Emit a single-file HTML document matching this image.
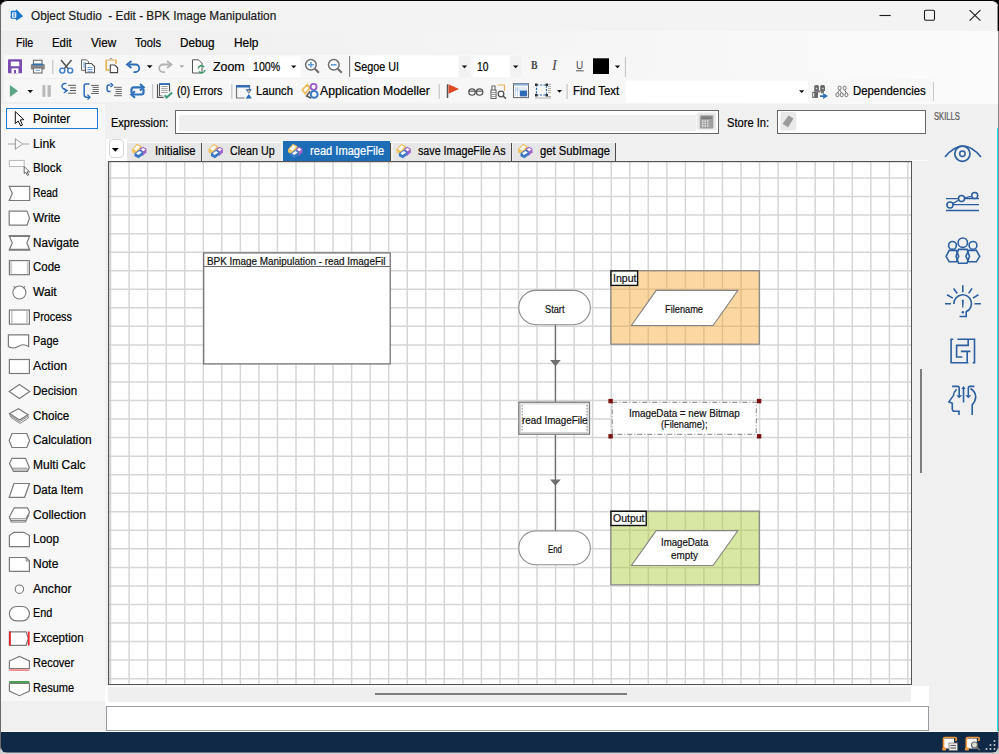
<!DOCTYPE html><html><head><meta charset="utf-8"><style>
html,body{margin:0;padding:0;width:999px;height:754px;overflow:hidden;background:#000;}
body{position:relative;font-family:"Liberation Sans",sans-serif;-webkit-text-stroke:0.2px currentColor;}
</style></head><body>
<div style="position:absolute;left:0px;top:0px;width:999px;height:754px;background:#f0f0f0;"></div>
<div style="position:absolute;left:0px;top:0px;width:999px;height:31px;background:#f3f3f3;"></div>
<div style="position:absolute;left:0px;top:31px;width:999px;height:23px;background:linear-gradient(to right,#eeeeee,#fbfbfb);"></div>
<div style="position:absolute;left:0px;top:54px;width:999px;height:50px;background:linear-gradient(to right,#eeeeee,#fbfbfb);"></div>
<div style="position:absolute;left:4px;top:55px;width:622px;height:23px;background:#f7f7f7;border-radius:3px 0 0 3px;"></div>
<div style="position:absolute;left:4px;top:79px;width:930px;height:23px;background:#f7f7f7;border-radius:3px 0 0 3px;"></div>
<div style="position:absolute;left:30.8px;top:8.73px;font-size:13px;line-height:14.52px;color:#1a1a1a;white-space:pre;transform:scaleX(0.9073);transform-origin:0 0;">Object Studio  - Edit - BPK Image Manipulation</div>
<div style="position:absolute;left:16.4px;top:36.87px;font-size:12.3px;line-height:13.74px;color:#000;white-space:pre;transform:scaleX(0.8678);transform-origin:0 0;">File</div>
<div style="position:absolute;left:52.4px;top:36.87px;font-size:12.3px;line-height:13.74px;color:#000;white-space:pre;transform:scaleX(0.9247);transform-origin:0 0;">Edit</div>
<div style="position:absolute;left:90.8px;top:36.87px;font-size:12.3px;line-height:13.74px;color:#000;white-space:pre;transform:scaleX(0.9531);transform-origin:0 0;">View</div>
<div style="position:absolute;left:134.9px;top:36.87px;font-size:12.3px;line-height:13.74px;color:#000;white-space:pre;transform:scaleX(0.9089);transform-origin:0 0;">Tools</div>
<div style="position:absolute;left:180px;top:36.87px;font-size:12.3px;line-height:13.74px;color:#000;white-space:pre;transform:scaleX(0.9546);transform-origin:0 0;">Debug</div>
<div style="position:absolute;left:233.5px;top:36.87px;font-size:12.3px;line-height:13.74px;color:#000;white-space:pre;transform:scaleX(0.9685);transform-origin:0 0;">Help</div>
<div style="position:absolute;left:1px;top:104px;width:104px;height:597px;background:#f7f7f7;"></div>
<div style="position:absolute;left:6px;top:108px;width:92px;height:21px;border:1px solid #1a7ad4;background:#fafafa;box-sizing:border-box;"></div>
<div style="position:absolute;left:32.8px;top:112.87px;font-size:12.3px;line-height:13.74px;color:#000;white-space:pre;transform:scaleX(0.9545);transform-origin:0 0;">Pointer</div>
<div style="position:absolute;left:32.8px;top:137.60px;font-size:12.3px;line-height:13.74px;color:#000;white-space:pre;transform:scaleX(0.9838);transform-origin:0 0;">Link</div>
<div style="position:absolute;left:32.8px;top:162.33px;font-size:12.3px;line-height:13.74px;color:#000;white-space:pre;transform:scaleX(0.9475);transform-origin:0 0;">Block</div>
<div style="position:absolute;left:32.8px;top:187.06px;font-size:12.3px;line-height:13.74px;color:#000;white-space:pre;transform:scaleX(0.8434);transform-origin:0 0;">Read</div>
<div style="position:absolute;left:32.8px;top:211.79px;font-size:12.3px;line-height:13.74px;color:#000;white-space:pre;transform:scaleX(0.9623);transform-origin:0 0;">Write</div>
<div style="position:absolute;left:32.8px;top:236.52px;font-size:12.3px;line-height:13.74px;color:#000;white-space:pre;transform:scaleX(0.9475);transform-origin:0 0;">Navigate</div>
<div style="position:absolute;left:32.8px;top:261.25px;font-size:12.3px;line-height:13.74px;color:#000;white-space:pre;transform:scaleX(0.9318);transform-origin:0 0;">Code</div>
<div style="position:absolute;left:32.8px;top:285.98px;font-size:12.3px;line-height:13.74px;color:#000;white-space:pre;transform:scaleX(0.9816);transform-origin:0 0;">Wait</div>
<div style="position:absolute;left:32.8px;top:310.71px;font-size:12.3px;line-height:13.74px;color:#000;white-space:pre;transform:scaleX(0.8755);transform-origin:0 0;">Process</div>
<div style="position:absolute;left:32.8px;top:335.44px;font-size:12.3px;line-height:13.74px;color:#000;white-space:pre;transform:scaleX(0.8911);transform-origin:0 0;">Page</div>
<div style="position:absolute;left:32.8px;top:360.17px;font-size:12.3px;line-height:13.74px;color:#000;white-space:pre;transform:scaleX(0.9975);transform-origin:0 0;">Action</div>
<div style="position:absolute;left:32.8px;top:384.90px;font-size:12.3px;line-height:13.74px;color:#000;white-space:pre;transform:scaleX(0.9370);transform-origin:0 0;">Decision</div>
<div style="position:absolute;left:32.8px;top:409.63px;font-size:12.3px;line-height:13.74px;color:#000;white-space:pre;transform:scaleX(0.9481);transform-origin:0 0;">Choice</div>
<div style="position:absolute;left:32.8px;top:434.36px;font-size:12.3px;line-height:13.74px;color:#000;white-space:pre;transform:scaleX(0.9646);transform-origin:0 0;">Calculation</div>
<div style="position:absolute;left:32.8px;top:459.09px;font-size:12.3px;line-height:13.74px;color:#000;white-space:pre;transform:scaleX(0.9742);transform-origin:0 0;">Multi Calc</div>
<div style="position:absolute;left:32.8px;top:483.82px;font-size:12.3px;line-height:13.74px;color:#000;white-space:pre;transform:scaleX(0.9377);transform-origin:0 0;">Data Item</div>
<div style="position:absolute;left:32.8px;top:508.55px;font-size:12.3px;line-height:13.74px;color:#000;white-space:pre;transform:scaleX(0.9813);transform-origin:0 0;">Collection</div>
<div style="position:absolute;left:32.8px;top:533.28px;font-size:12.3px;line-height:13.74px;color:#000;white-space:pre;transform:scaleX(0.9538);transform-origin:0 0;">Loop</div>
<div style="position:absolute;left:32.8px;top:558.01px;font-size:12.3px;line-height:13.74px;color:#000;white-space:pre;transform:scaleX(0.9776);transform-origin:0 0;">Note</div>
<div style="position:absolute;left:32.8px;top:582.74px;font-size:12.3px;line-height:13.74px;color:#000;white-space:pre;transform:scaleX(0.9878);transform-origin:0 0;">Anchor</div>
<div style="position:absolute;left:32.8px;top:607.47px;font-size:12.3px;line-height:13.74px;color:#000;white-space:pre;transform:scaleX(0.8818);transform-origin:0 0;">End</div>
<div style="position:absolute;left:32.8px;top:632.20px;font-size:12.3px;line-height:13.74px;color:#000;white-space:pre;transform:scaleX(0.9367);transform-origin:0 0;">Exception</div>
<div style="position:absolute;left:32.8px;top:656.93px;font-size:12.3px;line-height:13.74px;color:#000;white-space:pre;transform:scaleX(0.8995);transform-origin:0 0;">Recover</div>
<div style="position:absolute;left:32.8px;top:681.66px;font-size:12.3px;line-height:13.74px;color:#000;white-space:pre;transform:scaleX(0.8995);transform-origin:0 0;">Resume</div>
<div style="position:absolute;left:111.2px;top:116.87px;font-size:12.3px;line-height:13.74px;color:#000;white-space:pre;transform:scaleX(0.8916);transform-origin:0 0;">Expression:</div>
<div style="position:absolute;left:175px;top:110px;width:544px;height:24px;border:1px solid #676767;background:#fff;box-sizing:border-box;"></div>
<div style="position:absolute;left:179px;top:115px;width:517px;height:16px;background:#efefef;"></div>
<div style="position:absolute;left:727.2px;top:116.87px;font-size:12.3px;line-height:13.74px;color:#000;white-space:pre;transform:scaleX(0.9055);transform-origin:0 0;">Store In:</div>
<div style="position:absolute;left:777px;top:110px;width:149px;height:24px;border:1px solid #676767;background:#fff;box-sizing:border-box;"></div>
<div style="position:absolute;left:106px;top:139px;width:21px;height:22px;background:#fff;"></div>
<div style="position:absolute;left:108.5px;top:139.4px;width:15.2px;height:18.3px;background:#fff;border:1.5px solid #d6d6d6;border-radius:4px;box-sizing:border-box;"></div>
<div style="position:absolute;left:127px;top:142px;width:488px;height:1px;background:#fafafa;"></div>
<div style="position:absolute;left:127px;top:143px;width:74px;height:18px;background:#e6e6e6;"></div>
<div style="position:absolute;left:154.5px;top:145.17px;font-size:12.3px;line-height:13.74px;color:#000;white-space:pre;transform:scaleX(0.9114);transform-origin:0 0;">Initialise</div>
<div style="position:absolute;left:200.8px;top:142.5px;width:1.3px;height:18.7px;background:#4a4a4a;"></div>
<div style="position:absolute;left:203px;top:143px;width:78px;height:18px;background:#e6e6e6;"></div>
<div style="position:absolute;left:230.4px;top:145.17px;font-size:12.3px;line-height:13.74px;color:#000;white-space:pre;transform:scaleX(0.8697);transform-origin:0 0;">Clean Up</div>
<div style="position:absolute;left:282.8px;top:141.4px;width:107.39999999999998px;height:19.8px;background:#1c6db6;"></div>
<div style="position:absolute;left:309.7px;top:145.17px;font-size:12.3px;line-height:13.74px;color:#fff;white-space:pre;transform:scaleX(0.9032);transform-origin:0 0;">read ImageFile</div>
<div style="position:absolute;left:390.0px;top:142.5px;width:1.3px;height:18.7px;background:#4a4a4a;"></div>
<div style="position:absolute;left:392.8px;top:143px;width:118.5px;height:18px;background:#e6e6e6;"></div>
<div style="position:absolute;left:417.5px;top:145.17px;font-size:12.3px;line-height:13.74px;color:#000;white-space:pre;transform:scaleX(0.8707);transform-origin:0 0;">save ImageFile As</div>
<div style="position:absolute;left:511.1px;top:142.5px;width:1.3px;height:18.7px;background:#4a4a4a;"></div>
<div style="position:absolute;left:513.3px;top:143px;width:101.5px;height:18px;background:#e6e6e6;"></div>
<div style="position:absolute;left:540px;top:145.17px;font-size:12.3px;line-height:13.74px;color:#000;white-space:pre;transform:scaleX(0.9140);transform-origin:0 0;">get SubImage</div>
<div style="position:absolute;left:614.5999999999999px;top:142.5px;width:1.3px;height:18.7px;background:#4a4a4a;"></div>
<svg style="position:absolute;left:108px;top:161px;" width="804" height="524" viewBox="0 0 804 524"><rect x="0" y="0" width="804" height="524" fill="#fff"/><line x1="2.56" y1="0" x2="2.56" y2="524" stroke="#d6d6d6" stroke-width="1.5"/><line x1="21.10" y1="0" x2="21.10" y2="524" stroke="#d6d6d6" stroke-width="1.5"/><line x1="39.65" y1="0" x2="39.65" y2="524" stroke="#d6d6d6" stroke-width="1.5"/><line x1="58.19" y1="0" x2="58.19" y2="524" stroke="#d6d6d6" stroke-width="1.5"/><line x1="76.73" y1="0" x2="76.73" y2="524" stroke="#d6d6d6" stroke-width="1.5"/><line x1="95.28" y1="0" x2="95.28" y2="524" stroke="#d6d6d6" stroke-width="1.5"/><line x1="113.82" y1="0" x2="113.82" y2="524" stroke="#d6d6d6" stroke-width="1.5"/><line x1="132.36" y1="0" x2="132.36" y2="524" stroke="#d6d6d6" stroke-width="1.5"/><line x1="150.90" y1="0" x2="150.90" y2="524" stroke="#d6d6d6" stroke-width="1.5"/><line x1="169.45" y1="0" x2="169.45" y2="524" stroke="#d6d6d6" stroke-width="1.5"/><line x1="187.99" y1="0" x2="187.99" y2="524" stroke="#d6d6d6" stroke-width="1.5"/><line x1="206.53" y1="0" x2="206.53" y2="524" stroke="#d6d6d6" stroke-width="1.5"/><line x1="225.08" y1="0" x2="225.08" y2="524" stroke="#d6d6d6" stroke-width="1.5"/><line x1="243.62" y1="0" x2="243.62" y2="524" stroke="#d6d6d6" stroke-width="1.5"/><line x1="262.16" y1="0" x2="262.16" y2="524" stroke="#d6d6d6" stroke-width="1.5"/><line x1="280.71" y1="0" x2="280.71" y2="524" stroke="#d6d6d6" stroke-width="1.5"/><line x1="299.25" y1="0" x2="299.25" y2="524" stroke="#d6d6d6" stroke-width="1.5"/><line x1="317.79" y1="0" x2="317.79" y2="524" stroke="#d6d6d6" stroke-width="1.5"/><line x1="336.33" y1="0" x2="336.33" y2="524" stroke="#d6d6d6" stroke-width="1.5"/><line x1="354.88" y1="0" x2="354.88" y2="524" stroke="#d6d6d6" stroke-width="1.5"/><line x1="373.42" y1="0" x2="373.42" y2="524" stroke="#d6d6d6" stroke-width="1.5"/><line x1="391.96" y1="0" x2="391.96" y2="524" stroke="#d6d6d6" stroke-width="1.5"/><line x1="410.51" y1="0" x2="410.51" y2="524" stroke="#d6d6d6" stroke-width="1.5"/><line x1="429.05" y1="0" x2="429.05" y2="524" stroke="#d6d6d6" stroke-width="1.5"/><line x1="447.59" y1="0" x2="447.59" y2="524" stroke="#d6d6d6" stroke-width="1.5"/><line x1="466.14" y1="0" x2="466.14" y2="524" stroke="#d6d6d6" stroke-width="1.5"/><line x1="484.68" y1="0" x2="484.68" y2="524" stroke="#d6d6d6" stroke-width="1.5"/><line x1="503.22" y1="0" x2="503.22" y2="524" stroke="#d6d6d6" stroke-width="1.5"/><line x1="521.76" y1="0" x2="521.76" y2="524" stroke="#d6d6d6" stroke-width="1.5"/><line x1="540.31" y1="0" x2="540.31" y2="524" stroke="#d6d6d6" stroke-width="1.5"/><line x1="558.85" y1="0" x2="558.85" y2="524" stroke="#d6d6d6" stroke-width="1.5"/><line x1="577.39" y1="0" x2="577.39" y2="524" stroke="#d6d6d6" stroke-width="1.5"/><line x1="595.94" y1="0" x2="595.94" y2="524" stroke="#d6d6d6" stroke-width="1.5"/><line x1="614.48" y1="0" x2="614.48" y2="524" stroke="#d6d6d6" stroke-width="1.5"/><line x1="633.02" y1="0" x2="633.02" y2="524" stroke="#d6d6d6" stroke-width="1.5"/><line x1="651.57" y1="0" x2="651.57" y2="524" stroke="#d6d6d6" stroke-width="1.5"/><line x1="670.11" y1="0" x2="670.11" y2="524" stroke="#d6d6d6" stroke-width="1.5"/><line x1="688.65" y1="0" x2="688.65" y2="524" stroke="#d6d6d6" stroke-width="1.5"/><line x1="707.19" y1="0" x2="707.19" y2="524" stroke="#d6d6d6" stroke-width="1.5"/><line x1="725.74" y1="0" x2="725.74" y2="524" stroke="#d6d6d6" stroke-width="1.5"/><line x1="744.28" y1="0" x2="744.28" y2="524" stroke="#d6d6d6" stroke-width="1.5"/><line x1="762.82" y1="0" x2="762.82" y2="524" stroke="#d6d6d6" stroke-width="1.5"/><line x1="781.37" y1="0" x2="781.37" y2="524" stroke="#d6d6d6" stroke-width="1.5"/><line x1="799.91" y1="0" x2="799.91" y2="524" stroke="#d6d6d6" stroke-width="1.5"/><line x1="0" y1="17.00" x2="804" y2="17.00" stroke="#d6d6d6" stroke-width="1.5"/><line x1="0" y1="35.55" x2="804" y2="35.55" stroke="#d6d6d6" stroke-width="1.5"/><line x1="0" y1="54.09" x2="804" y2="54.09" stroke="#d6d6d6" stroke-width="1.5"/><line x1="0" y1="72.63" x2="804" y2="72.63" stroke="#d6d6d6" stroke-width="1.5"/><line x1="0" y1="91.18" x2="804" y2="91.18" stroke="#d6d6d6" stroke-width="1.5"/><line x1="0" y1="109.72" x2="804" y2="109.72" stroke="#d6d6d6" stroke-width="1.5"/><line x1="0" y1="128.26" x2="804" y2="128.26" stroke="#d6d6d6" stroke-width="1.5"/><line x1="0" y1="146.80" x2="804" y2="146.80" stroke="#d6d6d6" stroke-width="1.5"/><line x1="0" y1="165.35" x2="804" y2="165.35" stroke="#d6d6d6" stroke-width="1.5"/><line x1="0" y1="183.89" x2="804" y2="183.89" stroke="#d6d6d6" stroke-width="1.5"/><line x1="0" y1="202.43" x2="804" y2="202.43" stroke="#d6d6d6" stroke-width="1.5"/><line x1="0" y1="220.98" x2="804" y2="220.98" stroke="#d6d6d6" stroke-width="1.5"/><line x1="0" y1="239.52" x2="804" y2="239.52" stroke="#d6d6d6" stroke-width="1.5"/><line x1="0" y1="258.06" x2="804" y2="258.06" stroke="#d6d6d6" stroke-width="1.5"/><line x1="0" y1="276.61" x2="804" y2="276.61" stroke="#d6d6d6" stroke-width="1.5"/><line x1="0" y1="295.15" x2="804" y2="295.15" stroke="#d6d6d6" stroke-width="1.5"/><line x1="0" y1="313.69" x2="804" y2="313.69" stroke="#d6d6d6" stroke-width="1.5"/><line x1="0" y1="332.23" x2="804" y2="332.23" stroke="#d6d6d6" stroke-width="1.5"/><line x1="0" y1="350.78" x2="804" y2="350.78" stroke="#d6d6d6" stroke-width="1.5"/><line x1="0" y1="369.32" x2="804" y2="369.32" stroke="#d6d6d6" stroke-width="1.5"/><line x1="0" y1="387.86" x2="804" y2="387.86" stroke="#d6d6d6" stroke-width="1.5"/><line x1="0" y1="406.41" x2="804" y2="406.41" stroke="#d6d6d6" stroke-width="1.5"/><line x1="0" y1="424.95" x2="804" y2="424.95" stroke="#d6d6d6" stroke-width="1.5"/><line x1="0" y1="443.49" x2="804" y2="443.49" stroke="#d6d6d6" stroke-width="1.5"/><line x1="0" y1="462.04" x2="804" y2="462.04" stroke="#d6d6d6" stroke-width="1.5"/><line x1="0" y1="480.58" x2="804" y2="480.58" stroke="#d6d6d6" stroke-width="1.5"/><line x1="0" y1="499.12" x2="804" y2="499.12" stroke="#d6d6d6" stroke-width="1.5"/><line x1="0" y1="517.66" x2="804" y2="517.66" stroke="#d6d6d6" stroke-width="1.5"/><rect x="0.6" y="0.6" width="803" height="523" fill="none" stroke="#555" stroke-width="1.2"/></svg>
<svg style="position:absolute;left:0px;top:0px;" width="999" height="754" viewBox="0 0 999 754"><rect x="203.7" y="252.9" width="186.5" height="111" fill="#fff" stroke="#6a6a6a" stroke-width="1.2"/><line x1="203.7" y1="266.5" x2="390.2" y2="266.5" stroke="#6a6a6a" stroke-width="1.2"/><rect x="518.8" y="290.4" width="71.5" height="34.3" rx="17.1" fill="#fff" stroke="#8c8c8c" stroke-width="1.1"/><line x1="555.4" y1="324.7" x2="555.4" y2="402" stroke="#6e6e6e" stroke-width="1.3"/><path d="M550,360 L560.8,360 L555.4,366.3 Z" fill="#6e6e6e"/><line x1="555.4" y1="434.5" x2="555.4" y2="531" stroke="#6e6e6e" stroke-width="1.3"/><path d="M550,479.5 L560.8,479.5 L555.4,485.8 Z" fill="#6e6e6e"/><rect x="518.9" y="402.2" width="70.6" height="32" fill="#fff" stroke="#7a7a7a" stroke-width="1.3"/><rect x="520.6" y="403.9" width="67.2" height="28.6" fill="none" stroke="#d0d0d0" stroke-width="1"/><line x1="522.2" y1="405" x2="522.2" y2="432" stroke="#888" stroke-width="1" stroke-dasharray="1.5,1.5"/><line x1="586.9" y1="405" x2="586.9" y2="432" stroke="#888" stroke-width="1" stroke-dasharray="1.5,1.5"/><rect x="518.8" y="531" width="71.5" height="33.7" rx="16.8" fill="#fff" stroke="#8c8c8c" stroke-width="1.1"/><rect x="610.8" y="270.7" width="148.5" height="73.5" fill="#f5a020" fill-opacity="0.42" stroke="#858585" stroke-width="1.2"/><rect x="611" y="270.9" width="26.6" height="14.5" fill="#fff" stroke="#111" stroke-width="1.4"/><path d="M656.2,290.4 L737.9,290.4 L713.1,325.5 L631.4,325.5 Z" fill="#fff" stroke="#858585" stroke-width="1.1"/><rect x="612.3" y="402.3" width="144" height="32" fill="#fff" stroke="#9a9a9a" stroke-width="1.2" stroke-dasharray="5,2,1,2"/><rect x="608.4" y="398.90000000000003" width="4.4" height="4.4" fill="#7a1010"/><rect x="756.9" y="398.90000000000003" width="4.4" height="4.4" fill="#7a1010"/><rect x="608.4" y="434.1" width="4.4" height="4.4" fill="#7a1010"/><rect x="756.9" y="434.1" width="4.4" height="4.4" fill="#7a1010"/><rect x="610.8" y="511.1" width="148.5" height="73.7" fill="#a8cc30" fill-opacity="0.45" stroke="#858585" stroke-width="1.2"/><rect x="611" y="511.3" width="35.2" height="14.2" fill="#fff" stroke="#111" stroke-width="1.4"/><path d="M656.2,530.6 L737.9,530.6 L713.1,565.5 L631.4,565.5 Z" fill="#fff" stroke="#858585" stroke-width="1.1"/></svg>
<div style="position:absolute;left:206.6px;top:256.48px;font-size:10.3px;line-height:11.51px;color:#111;white-space:pre;transform:scaleX(0.9617);transform-origin:0 0;">BPK Image Manipulation - read ImageFil</div>
<div style="position:absolute;left:544.5px;top:304.18px;font-size:10.3px;line-height:11.51px;color:#111;white-space:pre;transform:scaleX(0.8965);transform-origin:0 0;">Start</div>
<div style="position:absolute;left:521.7px;top:414.68px;font-size:10.3px;line-height:11.51px;color:#111;white-space:pre;transform:scaleX(0.9548);transform-origin:0 0;">read ImageFile</div>
<div style="position:absolute;left:547.5px;top:544.18px;font-size:10.3px;line-height:11.51px;color:#111;white-space:pre;transform:scaleX(0.7639);transform-origin:0 0;">End</div>
<div style="position:absolute;left:612.7px;top:273.48px;font-size:10.3px;line-height:11.51px;color:#111;white-space:pre;transform:scaleX(1.0258);transform-origin:0 0;">Input</div>
<div style="position:absolute;left:665px;top:304.18px;font-size:10.3px;line-height:11.51px;color:#111;white-space:pre;transform:scaleX(0.8970);transform-origin:0 0;">Filename</div>
<div style="position:absolute;left:628.7px;top:407.68px;font-size:10.3px;line-height:11.51px;color:#111;white-space:pre;transform:scaleX(0.9557);transform-origin:0 0;">ImageData = new Bitmap</div>
<div style="position:absolute;left:661px;top:419.18px;font-size:10.3px;line-height:11.51px;color:#111;white-space:pre;transform:scaleX(0.8928);transform-origin:0 0;">(Filename);</div>
<div style="position:absolute;left:612.7px;top:513.48px;font-size:10.3px;line-height:11.51px;color:#111;white-space:pre;transform:scaleX(1.0188);transform-origin:0 0;">Output</div>
<div style="position:absolute;left:661px;top:537.18px;font-size:10.3px;line-height:11.51px;color:#111;white-space:pre;transform:scaleX(0.9388);transform-origin:0 0;">ImageData</div>
<div style="position:absolute;left:671px;top:549.98px;font-size:10.3px;line-height:11.51px;color:#111;white-space:pre;transform:scaleX(0.9590);transform-origin:0 0;">empty</div>
<div style="position:absolute;left:912px;top:160px;width:17px;height:1px;background:#fafafa;"></div>
<div style="position:absolute;left:105px;top:685.5px;width:824px;height:20.5px;background:#fff;"></div>
<div style="position:absolute;left:108px;top:687.2px;width:803px;height:14.8px;background:#efefef;"></div>
<div style="position:absolute;left:375px;top:693px;width:252px;height:2px;background:#7d7d7d;"></div>
<div style="position:absolute;left:920px;top:369px;width:2px;height:104px;background:#7d7d7d;"></div>
<div style="position:absolute;left:106px;top:706.2px;width:823px;height:24.5px;border:1px solid #9a9aa2;border-top-width:1.5px;background:#fff;box-sizing:border-box;"></div>
<div style="position:absolute;left:929px;top:104px;width:69px;height:628px;background:#f0f0f0;"></div>
<div style="position:absolute;left:934.2px;top:111.28px;font-size:10.3px;line-height:11.51px;color:#555;white-space:pre;transform:scaleX(0.7386);transform-origin:0 0;">SKILLS</div>
<div style="position:absolute;left:997px;top:128px;width:1px;height:604px;background:#19e3f0;"></div>
<div style="position:absolute;left:1px;top:731px;width:997px;height:1px;background:#fff;"></div>
<div style="position:absolute;left:0px;top:740px;width:999px;height:14px;background:#cfcfcf;"></div>
<div style="position:absolute;left:1px;top:732px;width:997px;height:20.6px;background:#0f2946;border-radius:0 0 6px 6px;"></div>
<svg style="position:absolute;left:0px;top:0px;" width="999" height="754" viewBox="0 0 999 754"><path d="M10.8,10.7 H15.5 L16.6,9.5 L23.1,16.3 L16.6,20.6 L15.2,18.8 H10.8 V17 L10.2,16.4 L10.8,15.8 Z" fill="#1a74c8"/><rect x="12" y="12.2" width="4.3" height="5.5" rx="0.6" fill="#e8f0fa"/><rect x="13.3" y="13.3" width="1.8" height="1.2" fill="#1a74c8"/><rect x="13.3" y="15.4" width="1.8" height="1.2" fill="#1a74c8"/><line x1="879.5" y1="15.5" x2="890.7" y2="15.5" stroke="#1a1a1a" stroke-width="1.1"/><rect x="924.5" y="10.2" width="10" height="10" rx="1.2" fill="none" stroke="#1a1a1a" stroke-width="1.1"/><path d="M969.6,10.2 L980.4,20.6 M980.4,10.2 L969.6,20.6" stroke="#1a1a1a" stroke-width="1.1"/><rect x="8" y="59.3" width="14" height="14" rx="0.8" fill="#7a4bb0"/><rect x="10.8" y="61.6" width="8.5" height="4.6" fill="#fff"/><rect x="11.5" y="68.4" width="7" height="4.9" fill="#fff"/><rect x="14" y="70" width="2" height="3.3" fill="#7a4bb0"/><rect x="33.5" y="60.3" width="8.5" height="4" fill="#fff" stroke="#777" stroke-width="1.2"/><rect x="30.8" y="64" width="14" height="5.5" rx="1" fill="#888"/><rect x="32.5" y="63.6" width="10.5" height="1.6" fill="#2f6fb6"/><rect x="33.5" y="68" width="8.5" height="5" fill="#fff" stroke="#777" stroke-width="1.2"/><rect x="35.5" y="69.8" width="4.5" height="1" fill="#6aa0d8"/><line x1="52.8" y1="59.8" x2="52.8" y2="73.8" stroke="#c4c4c4" stroke-width="1.2"/><path d="M61,60 L68.5,69 M71.5,60 L64,69" stroke="#555" stroke-width="1.5"/><circle cx="62.3" cy="70.6" r="2.5" fill="none" stroke="#3d7ec6" stroke-width="1.4"/><circle cx="70.2" cy="70.6" r="2.5" fill="none" stroke="#3d7ec6" stroke-width="1.4"/><path d="M81.5,59.8 h5 l2,2 v8.5 h-7 z" fill="#fff" stroke="#666" stroke-width="1"/><path d="M85.5,63.5 h6 l3,3 v6.3 h-9 z" fill="#fff" stroke="#555" stroke-width="1.1"/><path d="M83,63 h3 M83,65 h3 M83,67 h3 M87.5,67.5 h5 M87.5,69.5 h5 M87.5,71.3 h5" stroke="#5b8fc8" stroke-width="0.9"/><path d="M106.2,59.5 v10.5 h3.5 M116,59.5 v4.5" fill="none" stroke="#e8b55a" stroke-width="1.6"/><path d="M106.2,60.2 h9.8" stroke="#e8b55a" stroke-width="1"/><path d="M109.5,59.5 l1.5,-1.2 l1.5,1.2" fill="none" stroke="#777" stroke-width="0.9"/><path d="M110.3,65 h4.5 l2.8,2.8 v4.8 h-7.3 z" fill="#fff" stroke="#444" stroke-width="1.1"/><path d="M128.5,64.5 h7 a3.8,3.8 0 0 1 0,7.6 h-2" fill="none" stroke="#2d6cb5" stroke-width="1.8"/><path d="M131.5,61 L127,64.5 L131.5,68" fill="none" stroke="#2d6cb5" stroke-width="1.8"/><path d="M146.8,65.3 h5.8 l-2.9,2.9 z" fill="#111"/><path d="M170,64.5 h-7 a3.8,3.8 0 0 0 0,7.6 h2" fill="none" stroke="#b3b3b3" stroke-width="1.8"/><path d="M167,61 L171.5,64.5 L167,68" fill="none" stroke="#b3b3b3" stroke-width="1.8"/><path d="M179.3,65.3 h5 l-2.5,2.6 z" fill="#aaa"/><path d="M192.5,59.8 h6 l3.5,3.5 v9.7 h-9.5 z" fill="#fff" stroke="#555" stroke-width="1"/><path d="M198.2,68.5 a3.3,3.3 0 0 1 6,-1.3 M205,70 a3.3,3.3 0 0 1 -6,1.3" fill="none" stroke="#3e9a6a" stroke-width="1.5"/><rect x="248.7" y="56.5" width="52" height="21" fill="#fff"/><path d="M291,65.5 h5.4 l-2.7,2.7 z" fill="#111"/><circle cx="310.9" cy="64.8" r="5.3" fill="#fff" stroke="#6b6b6b" stroke-width="1.5"/><line x1="314.79999999999995" y1="68.7" x2="318.9" y2="72.8" stroke="#6b6b6b" stroke-width="2"/><path d="M308.09999999999997,64.8 h5.6 M310.9,62 v5.6" stroke="#5696d6" stroke-width="1.5"/><circle cx="333.8" cy="64.8" r="5.3" fill="#fff" stroke="#6b6b6b" stroke-width="1.5"/><line x1="337.7" y1="68.7" x2="341.8" y2="72.8" stroke="#6b6b6b" stroke-width="2"/><path d="M331.0,64.8 h5.6" stroke="#5696d6" stroke-width="1.5"/><line x1="349.8" y1="56" x2="349.8" y2="77" stroke="#555" stroke-width="1"/><rect x="350.5" y="55.6" width="120" height="21.4" fill="#fff"/><rect x="458.5" y="55.6" width="12" height="21.4" fill="#f2f2f2"/><path d="M461.8,65.5 h5.4 l-2.7,2.7 z" fill="#111"/><rect x="473" y="55.6" width="49" height="21.4" fill="#fff"/><rect x="510" y="55.6" width="12" height="21.4" fill="#f2f2f2"/><path d="M513,65.5 h5.4 l-2.7,2.7 z" fill="#111"/><rect x="593" y="58.3" width="16" height="15.7" fill="#000"/><path d="M614.8,65.5 h5.4 l-2.7,2.7 z" fill="#111"/><line x1="625.4" y1="57" x2="625.4" y2="77" stroke="#c0c0c0" stroke-width="1"/><path d="M9.9,85 L18,91 L9.9,97 Z" fill="#5da487"/><path d="M27.4,89.9 h5.7 l-2.85,3.2 z" fill="#111"/><rect x="42.4" y="85.2" width="3" height="11.6" fill="#b9b9b9"/><rect x="47.5" y="85.2" width="3.3" height="11.6" fill="#b9b9b9"/><path d="M64.5,83.5 a2.8,2.8 0 0 0 -1.5,5 l3.5,2.3" fill="none" stroke="#2d6cb5" stroke-width="1.5"/><path d="M63.8,93 L67.3,90.6 L63.8,88.5" fill="none" stroke="#2d6cb5" stroke-width="1.3"/><path d="M64,83.5 h2.5" stroke="#2d6cb5" stroke-width="1.3"/><path d="M68.2,85.3 h7.8 M70,87.9 h6 M70,90.5 h6 M68.2,93.2 h7.8" stroke="#555" stroke-width="1"/><path d="M89.5,84 h-4 a1.3,1.3 0 0 0 -1.3,1.3 v9.5 a2.5,2.5 0 0 0 2.5,2.5 h3.3" fill="none" stroke="#2d6cb5" stroke-width="1.5"/><path d="M87.5,94.8 L90,97.3 L87.5,99.6" fill="none" stroke="#2d6cb5" stroke-width="1.3"/><path d="M91,85.4 h7.8 M92.5,87.4 h6.3 M92.5,89.5 h6.3 M92.5,91.5 h6.3 M91,93.5 h7.8" stroke="#555" stroke-width="0.9"/><path d="M110.5,85 h-1.6 a1.8,1.8 0 0 0 -1.8,1.8 v2.8 a1.8,1.8 0 0 0 1.8,1.8 h1.6" fill="none" stroke="#2d6cb5" stroke-width="1.5"/><path d="M110.5,83 L112.8,85 L110.5,87" fill="none" stroke="#2d6cb5" stroke-width="1.3"/><path d="M114,87.3 h7.8 M115.5,89.4 h6.3 M115.5,91.5 h6.3 M115.5,93.6 h6.3 M114,95.7 h7.8" stroke="#555" stroke-width="0.9"/><path d="M131.5,93 v-3.5 a2.2,2.2 0 0 1 2.2,-2.2 h9" fill="none" stroke="#2d70bb" stroke-width="2.2"/><path d="M140,84 L143.8,87.3 L140,90.6" fill="none" stroke="#2d70bb" stroke-width="2"/><path d="M143.5,88.8 v3.5 a2.2,2.2 0 0 1 -2.2,2.2 h-9" fill="none" stroke="#2d70bb" stroke-width="2.2"/><path d="M135,91.2 L131.2,94.5 L135,97.8" fill="none" stroke="#2d70bb" stroke-width="2"/><line x1="152.6" y1="84" x2="152.6" y2="98.7" stroke="#c4c4c4" stroke-width="1.2"/><line x1="231.8" y1="84.3" x2="231.8" y2="98.7" stroke="#c4c4c4" stroke-width="1.2"/><line x1="439.2" y1="84.3" x2="439.2" y2="98.7" stroke="#c4c4c4" stroke-width="1.2"/><line x1="567.1" y1="84" x2="567.1" y2="99" stroke="#c4c4c4" stroke-width="1.2"/><path d="M157.5,84.2 V97.4 H163.7 M159.6,83.6 V95.3 H162.6" fill="none" stroke="#555" stroke-width="1.2"/><rect x="160.2" y="84.5" width="9.3" height="11" fill="#fff"/><rect x="159.2" y="83.1" width="10.8" height="1.9" fill="#2d6cb5"/><path d="M169.5,84.9 V91.4" stroke="#555" stroke-width="1.2"/><path d="M161.2,86.5 h6.6 M161.2,88.4 h6.6 M161.2,90.4 h6.6 M161.2,92.5 h6.6" stroke="#888" stroke-width="0.8"/><path d="M164.7,95.2 L166.7,97.5 L172.1,92.4" fill="none" stroke="#3e9c76" stroke-width="2.1"/><path d="M249.5,92 v-6.3 h-13 v12.3 h8" fill="none" stroke="#777" stroke-width="1.2"/><rect x="236" y="85.2" width="13.8" height="2.3" fill="#2d6cb5"/><path d="M245.6,89.2 h6.3 l-3.15,4.5 z M245.6,98.6 h6.3 l-3.15,-4.5 z" fill="#2d6cb5"/><path d="M247.2,90.5 h3 l-1.5,2.2 z" fill="#e8c070"/><path d="M302.3,89.8 L307.3,84.6 L309.8,87.7 L305.2,93.8 Z" fill="#fff" stroke="#efbd5a" stroke-width="1.8" stroke-linejoin="round"/><path d="M310.2,91.3 L306.6,96 L311.3,98.2" fill="none" stroke="#555" stroke-width="1.5"/><circle cx="313.6" cy="86.8" r="3" fill="#fff" stroke="#9a5cc8" stroke-width="1.8"/><circle cx="314.2" cy="94.4" r="3.4" fill="#fff" stroke="#3a7ac4" stroke-width="2"/><line x1="447.5" y1="84.3" x2="447.5" y2="98" stroke="#555" stroke-width="1.5"/><path d="M448.5,84.3 L459,89 L448.5,93.7 Z" fill="#dc4a26"/><circle cx="472" cy="92" r="3.2" fill="none" stroke="#555" stroke-width="1.3"/><circle cx="479.6" cy="92" r="3.2" fill="none" stroke="#555" stroke-width="1.3"/><path d="M468.5,91.2 h14.5" stroke="#555" stroke-width="1.1"/><path d="M491,90 h5 v8.5 h-5 z M492,86 h3 v4 h-3 z" fill="#fff" stroke="#666" stroke-width="1.1"/><path d="M491.5,92.5 h4 M491.5,94.5 h4 M491.5,96.5 h4" stroke="#888" stroke-width="0.8"/><path d="M497.5,85 h7 v6" fill="none" stroke="#e6b460" stroke-width="1.2"/><circle cx="501" cy="94" r="2.8" fill="#fff" stroke="#555" stroke-width="1.3"/><line x1="503" y1="96" x2="506" y2="98.6" stroke="#555" stroke-width="1.6"/><rect x="513.5" y="83.6" width="15" height="14" fill="#fff" stroke="#666" stroke-width="1"/><rect x="513.5" y="83.6" width="15" height="2" fill="#8ab0d8"/><path d="M515.5,87.5 v9 M517.5,87.5 v9 M515,88 h12 M515,90 h12" stroke="#a8c4e4" stroke-width="0.7"/><rect x="519.8" y="90.6" width="7.3" height="5.8" fill="#2d6cb5"/><rect x="536.5" y="85" width="10" height="10" fill="none" stroke="#2d6cb5" stroke-width="1.2" stroke-dasharray="2.2,1.3"/><path d="M535,83.5 h2.5 v2.5 h-2.5 z M545.5,83.5 h2.5 v2.5 h-2.5 z M535,94 h2.5 v2.5 h-2.5 z M545.5,94 h2.5 v2.5 h-2.5 z" fill="#333"/><path d="M548,84.5 h3 M548,86.5 h3 M548,88.5 h3 M548,90.5 h3 M548,92.5 h3 M535,98 h16 M548,96.5 h3" stroke="#999" stroke-width="0.8"/><path d="M557,90 h5 l-2.5,2.8 z" fill="#111"/><rect x="626" y="80.6" width="182" height="22.1" fill="#fff"/><path d="M799,90.2 h5.3 l-2.65,2.8 z" fill="#111"/><rect x="812.2" y="91.8" width="5.8" height="6.1" fill="#666"/><rect x="813.2" y="93" width="1" height="3.7" fill="#fff"/><path d="M814.2,91.8 V86.5 Q814.2,85 815.7,85 H817.4 Q818.9,85 818.9,86.5 V91.8 Z" fill="#6a6a6a"/><circle cx="816.5" cy="88.5" r="0.8" fill="#ddd"/><rect x="818" y="90.5" width="2.5" height="2" fill="#777"/><path d="M820.2,91 V86.5 Q820.2,85 821.7,85 H823.5 Q825,85 825,86.5 V91 Z" fill="#6a6a6a"/><circle cx="823" cy="88.5" r="0.8" fill="#ddd"/><rect x="821" y="91" width="3" height="2.3" fill="#777"/><rect x="820" y="95.3" width="4" height="1.7" fill="#2f6fb6"/><path d="M823.1,93.1 L828,96.1 L823.1,99 Z" fill="#2f6fb6"/><g fill="#fff" stroke="#6b6b6b" stroke-width="1"><rect x="838.2" y="86.2" width="2.8" height="3.6" rx="1.2"/><rect x="843.3" y="86.2" width="2.8" height="3.6" rx="1.2"/><rect x="836" y="93" width="2.8" height="3.6" rx="1.2"/><rect x="840.3" y="93" width="2.8" height="3.6" rx="1.2"/><rect x="845" y="93" width="2.8" height="3.6" rx="1.2"/></g><path d="M839.6,90 l-2.2,3 M839.6,90 l2,3 M844.7,90 l1.6,3" stroke="#6b6b6b" stroke-width="0.9"/><line x1="933.5" y1="82" x2="933.5" y2="101" stroke="#c8c8c8" stroke-width="1"/><rect x="696.6" y="112.4" width="19.6" height="17.8" rx="2" fill="#e9e9e9"/><rect x="699.8" y="115.2" width="13.6" height="13.2" rx="1" fill="#a0a0a0"/><rect x="701.5" y="116.5" width="10.2" height="2.5" fill="#7d7d7d"/><path d="M702,121 h1.5 M704.5,121 h1.5 M707,121 h1.5 M702,123.5 h1.5 M704.5,123.5 h1.5 M707,123.5 h1.5 M702,126 h1.5 M704.5,126 h1.5 M707,126 h1.5" stroke="#e6e6e6" stroke-width="1.3"/><rect x="780.3" y="112" width="16" height="18.5" rx="2" fill="#e9e9e9"/><path d="M782.5,124 l6,-8.5 l5,3 l-5.5,9 z" fill="#9a9a9a"/><path d="M782.5,124 l5.5,3.5" stroke="#ddd" stroke-width="0.8"/><path d="M111.8,148 h7 l-3.5,3.8 z" fill="#000"/><g transform="translate(132,143.2)"><path d="M0,6 L5,0.5 L9.5,3 L9.5,6.5 L4.5,11.5 L0,9 Z" fill="#f2c260"/><path d="M1.5,5.8 L5.2,2 L8,3.8 L4.3,7.6 Z" fill="#fff"/><path d="M8,5 L11,3.5 L14.5,5.5 L14.5,9 L11,12.5 L8,11 Z" fill="#a066cc"/><path d="M9,6 L11.3,4.8 L13.5,6.2 L11,8 Z" fill="#fff"/><path d="M2.5,10 L7.5,6.5 L11,8.5 L11,11.5 L6.5,15 L2.5,13 Z" fill="#3b78c2"/><path d="M4,10 L7.5,7.8 L9.8,9.2 L6.2,11.8 Z" fill="#fff"/></g><g transform="translate(208.5,143.2)"><path d="M0,6 L5,0.5 L9.5,3 L9.5,6.5 L4.5,11.5 L0,9 Z" fill="#f2c260"/><path d="M1.5,5.8 L5.2,2 L8,3.8 L4.3,7.6 Z" fill="#fff"/><path d="M8,5 L11,3.5 L14.5,5.5 L14.5,9 L11,12.5 L8,11 Z" fill="#a066cc"/><path d="M9,6 L11.3,4.8 L13.5,6.2 L11,8 Z" fill="#fff"/><path d="M2.5,10 L7.5,6.5 L11,8.5 L11,11.5 L6.5,15 L2.5,13 Z" fill="#3b78c2"/><path d="M4,10 L7.5,7.8 L9.8,9.2 L6.2,11.8 Z" fill="#fff"/></g><g transform="translate(288,143.2)"><path d="M0,6 L5,0.5 L9.5,3 L9.5,6.5 L4.5,11.5 L0,9 Z" fill="#f2c260"/><path d="M1.5,5.8 L5.2,2 L8,3.8 L4.3,7.6 Z" fill="#fff"/><path d="M8,5 L11,3.5 L14.5,5.5 L14.5,9 L11,12.5 L8,11 Z" fill="#a066cc"/><path d="M9,6 L11.3,4.8 L13.5,6.2 L11,8 Z" fill="#fff"/><path d="M2.5,10 L7.5,6.5 L11,8.5 L11,11.5 L6.5,15 L2.5,13 Z" fill="#3b78c2"/><path d="M4,10 L7.5,7.8 L9.8,9.2 L6.2,11.8 Z" fill="#fff"/></g><g transform="translate(396.4,143.2)"><path d="M0,6 L5,0.5 L9.5,3 L9.5,6.5 L4.5,11.5 L0,9 Z" fill="#f2c260"/><path d="M1.5,5.8 L5.2,2 L8,3.8 L4.3,7.6 Z" fill="#fff"/><path d="M8,5 L11,3.5 L14.5,5.5 L14.5,9 L11,12.5 L8,11 Z" fill="#a066cc"/><path d="M9,6 L11.3,4.8 L13.5,6.2 L11,8 Z" fill="#fff"/><path d="M2.5,10 L7.5,6.5 L11,8.5 L11,11.5 L6.5,15 L2.5,13 Z" fill="#3b78c2"/><path d="M4,10 L7.5,7.8 L9.8,9.2 L6.2,11.8 Z" fill="#fff"/></g><g transform="translate(518,143.2)"><path d="M0,6 L5,0.5 L9.5,3 L9.5,6.5 L4.5,11.5 L0,9 Z" fill="#f2c260"/><path d="M1.5,5.8 L5.2,2 L8,3.8 L4.3,7.6 Z" fill="#fff"/><path d="M8,5 L11,3.5 L14.5,5.5 L14.5,9 L11,12.5 L8,11 Z" fill="#a066cc"/><path d="M9,6 L11.3,4.8 L13.5,6.2 L11,8 Z" fill="#fff"/><path d="M2.5,10 L7.5,6.5 L11,8.5 L11,11.5 L6.5,15 L2.5,13 Z" fill="#3b78c2"/><path d="M4,10 L7.5,7.8 L9.8,9.2 L6.2,11.8 Z" fill="#fff"/></g><path d="M945,157 Q963,135 981,157" fill="none" stroke="#2b5f9f" stroke-width="1.7"/><circle cx="962.4" cy="153.8" r="7.6" fill="none" stroke="#2b5f9f" stroke-width="1.7"/><circle cx="962.4" cy="153.8" r="2.7" fill="none" stroke="#2b5f9f" stroke-width="1.5"/><path d="M946,198.6 h33 M946,204.6 h33 M946,210.5 h33" stroke="#2b5f9f" stroke-width="1.3"/><g fill="#f0f0f0" stroke="#2b5f9f" stroke-width="1.5"><circle cx="950" cy="205.1" r="3"/><circle cx="961.5" cy="198.6" r="3"/><circle cx="974.7" cy="195.6" r="3"/></g><path d="M952.7,203.6 L958.8,200 M964.4,197.8 L971.8,196.3" stroke="#2b5f9f" stroke-width="1.3"/><g fill="none" stroke="#2b5f9f" stroke-width="1.6"><circle cx="952.5" cy="245.4" r="3.9"/><circle cx="973" cy="245.4" r="3.9"/><circle cx="962.8" cy="242.7" r="4.7"/><path d="M946.1,256.3 L949.2,250.4 H956.3 L958.7,256.3 L956.3,261.8 H949.2 Z"/><path d="M965.9,256.3 L968.5,250.4 H976.4 L979.7,256.3 L976.4,261.8 H968.5 Z"/><path d="M956,256.3 L958.5,249.4 H967 L969.5,256.3 L967,263.3 H958.5 Z"/></g><g fill="none" stroke="#2b5f9f" stroke-width="1.6"><path d="M962.8,285.3 V292.2 M953.6,288.4 L957.3,293.4 M972,288.4 L968.7,293.4 M947,294.8 L952.8,298.1 M978.4,294.8 L972.9,298.1 M945,303.8 H950.9 M974.5,303.8 H980.9"/><path d="M953.9,303.9 A8.8,8.8 0 1 1 966.2,311.7 V316.5 H959.5"/></g><path d="M961.8,299.8 h2 l-0.5,8 h-1 z" fill="#2b5f9f"/><circle cx="962.8" cy="312.2" r="1.2" fill="#2b5f9f"/><g fill="none" stroke="#2b5f9f" stroke-width="1.6"><path d="M953.3,339.3 H951.1 V362.7 H968.4 M957.4,339.3 H974.5 V362.7 H972.7 M968.2,339.3 V345.4 H956.6 V357 H962.4 M960.9,351.4 H970.5 M967.2,351.4 V362.7"/></g><g fill="none" stroke="#2b5f9f" stroke-width="1.6"><path d="M952.1,386.4 H957.5 Q959.2,386.4 959.2,388.5 V395.5 M974.4,386.4 H970 Q968.3,386.4 968.3,388.5 V395.5 M963.5,388 V402.5"/><path d="M956.6,389.3 Q953.5,392.5 953.4,395.6 L948.9,401.8 L952.3,403.3 V409 Q952.3,411.3 954.7,411.3 H959 V415 M970.6,388.5 Q975.7,392 975.7,397 Q975.7,401 972.2,404.9 V415"/></g><path d="M956.3,395.2 H962.2 L959.2,398.3 Z M965.3,395.2 H971.3 L968.3,398.3 Z M961.3,389 H965.7 L963.5,386 Z" fill="#2b5f9f"/><g transform="translate(942,736.5)"><path d="M2,2 h10 v10 h-10 z" fill="#fff"/><path d="M3,1 h10 a1.5,1.5 0 0 1 0,3 M3,1 a1.5,1.5 0 0 0 -1.5,1.5 v9" fill="none" stroke="#f29a3a" stroke-width="1.6"/><path d="M0,11 h4 v3 h-2.5 a1.5,1.5 0 0 1 0,-3 z" fill="#f29a3a"/></g><rect x="949" y="743" width="8.5" height="7.5" fill="#e8e8e8" stroke="#777" stroke-width="0.8"/><path d="M950.5,745.5 h5.5 M950.5,748 h5.5" stroke="#555" stroke-width="1"/><g transform="translate(964.8,736.5)"><path d="M2,2 h10 v10 h-10 z" fill="#fff"/><path d="M3,1 h10 a1.5,1.5 0 0 1 0,3 M3,1 a1.5,1.5 0 0 0 -1.5,1.5 v9" fill="none" stroke="#f29a3a" stroke-width="1.6"/><path d="M0,11 h4 v3 h-2.5 a1.5,1.5 0 0 1 0,-3 z" fill="#f29a3a"/></g><circle cx="974.5" cy="745" r="3" fill="#ddd" stroke="#666" stroke-width="1.2"/><line x1="976.6" y1="747.1" x2="979.8" y2="750.3" stroke="#777" stroke-width="1.5"/><g fill="#c8c8c8"><circle cx="994.5" cy="741" r="1"/><circle cx="990.5" cy="745" r="1"/><circle cx="994.5" cy="745" r="1"/><circle cx="986.5" cy="749" r="1"/><circle cx="990.5" cy="749" r="1"/><circle cx="994.5" cy="749" r="1"/></g><path d="M15.3,111.6 L15.3,123.6 L18.2,121 L20.8,126 L22.5,125 L20.2,120 L23.8,119.6 Z" fill="#fff" stroke="#111" stroke-width="1"/><path d="M8,144 h7.4 M22.6,144 h6.9 M15.4,138.5 v11" stroke="#a3a3a3" stroke-width="1.2"/><path d="M15.4,138.8 L22.6,144 L15.4,149.2" fill="none" stroke="#a3a3a3" stroke-width="1"/><rect x="9.3" y="160.5" width="14.9" height="6" fill="#fff" stroke="#bdbdbd" stroke-width="1.1"/><path d="M24.2,166.5 L24.2,173.6 L25.9,172.3 L27.6,175.6 L28.6,175 L27.2,171.8 L29.5,171.9 Z" fill="#fff" stroke="#555" stroke-width="0.9"/><path d="M9.2,186.39 H29.7 V200.49 H9.2 L12.3,193.44 Z" fill="#fff" stroke="#7b7b7b" stroke-width="1.2"/><path d="M9.2,211.12 H27 L29.5,218.17000000000002 L27,225.22000000000003 H9.2 Z" fill="#fff" stroke="#7b7b7b" stroke-width="1.2" stroke-linejoin="round"/><path d="M9.2,235.85 H29.7 L26.9,242.9 L29.7,249.95000000000002 H9.2 L12.3,242.9 Z" fill="#fff" stroke="#7b7b7b" stroke-width="1.2"/><path d="M9.2,236.15 H29.7 M9.2,249.65 H29.7" stroke="#7b7b7b" stroke-width="1.8"/><rect x="9.4" y="260.58" width="20" height="14.100000000000023" fill="#fff" stroke="#7b7b7b" stroke-width="1.2" stroke-width="1.4"/><rect x="10.3" y="261.58" width="1.8" height="12.100000000000023" fill="#c4c4c4"/><rect x="26.8" y="261.58" width="1.8" height="12.100000000000023" fill="#c4c4c4"/><path d="M12,262.08 v11.100000000000023 M26.8,262.08 v11.100000000000023" stroke="#fff" stroke-width="0.6" stroke-dasharray="1.5,1.5"/><circle cx="19.4" cy="292.5" r="6.5" fill="#fff" stroke="#7b7b7b" stroke-width="1.1"/><path d="M13.6,286.5 l1.8,0.6 l-0.6,1.5 M25.2,286.5 l-1.8,0.6 l0.6,1.5" fill="#999" stroke="#7b7b7b" stroke-width="1"/><rect x="9.4" y="310.04" width="20" height="14.100000000000023" fill="#fff" stroke="#7b7b7b" stroke-width="1.2"/><rect x="11" y="310.84000000000003" width="1.6" height="12.500000000000023" fill="#c8c8c8"/><rect x="26.2" y="310.84000000000003" width="1.6" height="12.500000000000023" fill="#c8c8c8"/><path d="M8.4,334.8 H28.6 V346.5 Q23,343 18,346.5 Q13,349.5 8.4,346.5 Z" fill="#fff" stroke="#7b7b7b" stroke-width="1.2"/><rect x="9.4" y="359.5" width="20" height="14" fill="#fff" stroke="#7b7b7b" stroke-width="1.2" stroke-width="1.3"/><path d="M9.2,391.5 L19.4,384.4 L29.7,391.5 L19.4,398.6 Z" fill="#fff" stroke="#7b7b7b" stroke-width="1.2"/><path d="M9.6,413.5 L18.5,408.8 L28,414.8 L19.5,420 Z" fill="#fff" stroke="#7b7b7b" stroke-width="1.2"/><path d="M9.6,413.5 L10.2,415.5 L19.5,421.6 L28,416.3 L28,414.8 M10.2,415.5 L11,417.5 L20,423.4 L28.5,418 L28,416.3" fill="none" stroke="#7b7b7b" stroke-width="0.9"/><path d="M12,433.5 H26.8 L29.6,440.5 L26.8,447.5 H12 L9.2,440.5 Z" fill="#fff" stroke="#7b7b7b" stroke-width="1.2"/><path d="M12,458.3 H25.5 L29.3,467.5 L27.5,471.5 H13.5 L9.5,463.5 Z" fill="#fff" stroke="#7b7b7b" stroke-width="1.2"/><path d="M12,468.2 H27.7 M12.8,470 H28" stroke="#7b7b7b" stroke-width="0.9"/><path d="M14,483.5 H29.5 L24.6,497.3 H9.2 Z" fill="#fff" stroke="#7b7b7b" stroke-width="1.2"/><path d="M14.3,507.8 H27.5 L29.5,512 L25.5,522 H11.3 L9.3,517 Z" fill="#fff" stroke="#7b7b7b" stroke-width="1.2"/><path d="M10,518.8 H25.5 L28.8,513.5 M10.8,520.5 H25.8 L29.2,515" fill="none" stroke="#7b7b7b" stroke-width="0.9"/><path d="M9.4,535.5 L14,532.3 H23.9 L29.4,535.5 V546.6 H9.4 Z" fill="#fff" stroke="#7b7b7b" stroke-width="1.2"/><path d="M9.4,557.5 H26.2 L29.4,560.8 V571.4 H9.4 Z" fill="#fff" stroke="#7b7b7b" stroke-width="1.2" stroke-width="1.3"/><path d="M26,557.8 v3.2 h3.2" fill="none" stroke="#7b7b7b" stroke-width="0.9"/><circle cx="19.4" cy="589.2" r="4.2" fill="#fff" stroke="#7b7b7b" stroke-width="1.1"/><rect x="9.4" y="606.5" width="20" height="14.3" rx="7" fill="#fff" stroke="#7b7b7b" stroke-width="1.2" stroke-width="1.3"/><path d="M9.4,631.8 H26 L28.4,638.5 L26,645.3 H9.4 Z" fill="#fff" stroke="#7b7b7b" stroke-width="1.2"/><rect x="9" y="631.5" width="1.8" height="14" fill="#e02020"/><rect x="27.8" y="631.5" width="1.8" height="14" fill="#f02a2a"/><path d="M9.4,661 L19.4,656.5 L29.4,661 V668.5 H9.4 Z" fill="#fff" stroke="#7b7b7b" stroke-width="1.2"/><rect x="9.2" y="669.2" width="20.2" height="1.8" fill="#f08a8a"/><rect x="9.2" y="681" width="20.2" height="2" fill="#4aa050"/><path d="M9.4,683.5 H29.4 V691 L19.4,695.7 L9.4,691 Z" fill="#fff" stroke="#7b7b7b" stroke-width="1.2"/></svg>
<div style="position:absolute;left:212.5px;top:60.87px;font-size:12.3px;line-height:13.74px;color:#000;white-space:pre;transform:scaleX(1.0050);transform-origin:0 0;">Zoom</div>
<div style="position:absolute;left:252.7px;top:60.87px;font-size:12.3px;line-height:13.74px;color:#000;white-space:pre;transform:scaleX(0.8614);transform-origin:0 0;">100%</div>
<div style="position:absolute;left:354px;top:60.87px;font-size:12.3px;line-height:13.74px;color:#000;white-space:pre;transform:scaleX(0.8774);transform-origin:0 0;">Segoe UI</div>
<div style="position:absolute;left:476.6px;top:60.87px;font-size:12.3px;line-height:13.74px;color:#000;white-space:pre;transform:scaleX(0.8332);transform-origin:0 0;">10</div>
<svg style="position:absolute;left:0;top:0" width="999" height="754"><text x="531" y="69.4" font-family="Liberation Serif" font-weight="bold" font-size="12.5" fill="#4a4a4a" textLength="6.6" lengthAdjust="spacingAndGlyphs">B</text><text x="552" y="70.4" font-family="Liberation Serif" font-style="italic" font-size="14.5" fill="#4a4a4a">I</text><text x="576" y="69" font-family="Liberation Sans" font-size="11.6" fill="#4a4a4a" textLength="7.2" lengthAdjust="spacingAndGlyphs">U</text><rect x="576" y="70.3" width="7.7" height="1" fill="#555"/></svg>
<div style="position:absolute;left:176.6px;top:84.87px;font-size:12.3px;line-height:13.74px;color:#000;white-space:pre;transform:scaleX(0.8742);transform-origin:0 0;">(0) Errors</div>
<div style="position:absolute;left:256.4px;top:84.87px;font-size:12.3px;line-height:13.74px;color:#000;white-space:pre;transform:scaleX(0.9169);transform-origin:0 0;">Launch</div>
<div style="position:absolute;left:320.4px;top:84.87px;font-size:12.3px;line-height:13.74px;color:#000;white-space:pre;transform:scaleX(0.9922);transform-origin:0 0;">Application Modeller</div>
<div style="position:absolute;left:572.6px;top:84.87px;font-size:12.3px;line-height:13.74px;color:#000;white-space:pre;transform:scaleX(0.9299);transform-origin:0 0;">Find Text</div>
<div style="position:absolute;left:852.8px;top:84.87px;font-size:12.3px;line-height:13.74px;color:#000;white-space:pre;transform:scaleX(0.9244);transform-origin:0 0;">Dependencies</div>
<div style="position:absolute;left:0;top:0;width:999px;height:754px;box-sizing:border-box;border:1px solid #000;border-left-color:#6a6a6a;border-right-color:#8a8a8a;border-bottom:none;border-radius:7px 7px 0 0;pointer-events:none;"></div>
<svg style="position:absolute;left:0;top:0" width="999" height="754"><path d="M0,0 H7.5 A7.5,7.5 0 0 0 0,7.5 Z" fill="#000"/><path d="M999,0 H991 A7.5,7.5 0 0 1 998.5,7.5 V31 H999 Z" fill="#000"/><rect x="997.6" y="6" width="1.4" height="25" fill="#000"/><path d="M0,754 V746 A6,6 0 0 0 6,752.6 H993 A6,6 0 0 0 999,746 V754 Z" fill="#cfcfcf"/></svg>
</body></html>
